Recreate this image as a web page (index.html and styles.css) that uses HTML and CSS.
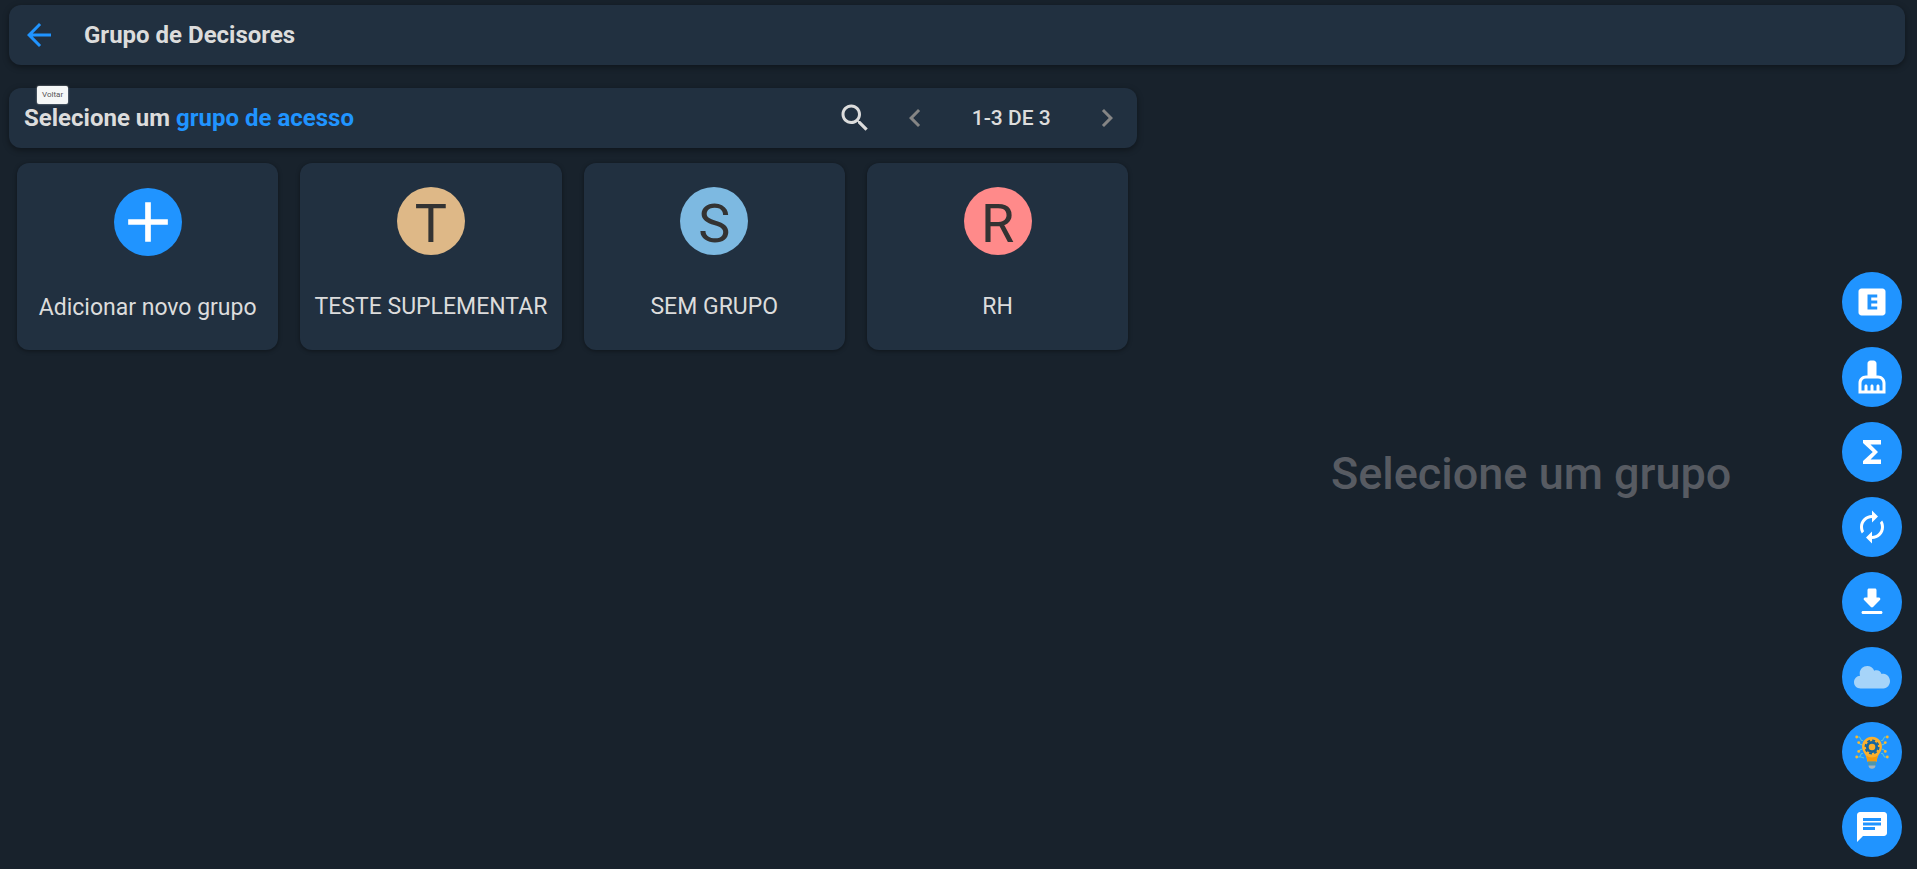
FILE: index.html
```
<!DOCTYPE html>
<html lang="pt-BR">
<head>
    <meta charset="UTF-8">
    <meta name="viewport" content="width=device-width, initial-scale=1.0">
    <title>Grupo de Decisores</title>
    <link rel="stylesheet" href="styles.css">
</head>
<body>
    <header class="topbar">
        <button type="button" class="icon-btn back-btn" aria-label="Voltar" aria-describedby="tooltip-voltar">
            <svg class="icon" viewBox="0 0 24 24"><path d="M20 11H7.83l5.59-5.59L12 4l-8 8 8 8 1.41-1.41L7.83 13H20v-2z"/></svg>
        </button>
        <h1>Grupo de Decisores</h1>
        <span class="tooltip" id="tooltip-voltar" role="tooltip">Voltar</span>
    </header>

    <main class="content">
        <section class="groups">
            <div class="toolbar">
                <h2>Selecione um <span>grupo de acesso</span></h2>
                <button type="button" class="icon-btn search-btn" aria-label="Pesquisar">
                    <svg class="icon" viewBox="0 0 24 24"><path d="M15.5 14h-.79l-.28-.27C15.41 12.59 16 11.11 16 9.5 16 5.91 13.09 3 9.5 3S3 5.91 3 9.5 5.91 16 9.5 16c1.61 0 3.09-.59 4.23-1.57l.27.28v.79l5 4.99L20.49 19l-4.99-5zm-6 0C7.01 14 5 11.99 5 9.5S7.01 5 9.5 5 14 7.01 14 9.5 11.99 14 9.5 14z"/></svg>
                </button>
                <div class="pager">
                    <button type="button" class="icon-btn" aria-label="Página anterior" disabled>
                        <svg class="icon" viewBox="0 0 24 24"><path d="M15.41 7.41L14 6l-6 6 6 6 1.41-1.41L10.83 12z"/></svg>
                    </button>
                    <span class="pager-text">1-3 DE 3</span>
                    <button type="button" class="icon-btn" aria-label="Próxima página" disabled>
                        <svg class="icon" viewBox="0 0 24 24"><path d="M10 6L8.59 7.41 13.17 12l-4.58 4.59L10 18l6-6z"/></svg>
                    </button>
                </div>
            </div>

            <div class="cards">
                <button type="button" class="card card-add">
                    <span class="avatar avatar-add">
                        <svg viewBox="0 0 24 24"><path d="M19 13h-6v6h-2v-6H5v-2h6V5h2v6h6v2z"/></svg>
                    </span>
                    <span class="card-name">Adicionar novo grupo</span>
                </button>
                <button type="button" class="card">
                    <span class="avatar avatar-tan">T</span>
                    <span class="card-name">TESTE SUPLEMENTAR</span>
                </button>
                <button type="button" class="card">
                    <span class="avatar avatar-sky">S</span>
                    <span class="card-name">SEM GRUPO</span>
                </button>
                <button type="button" class="card">
                    <span class="avatar avatar-red">R</span>
                    <span class="card-name">RH</span>
                </button>
            </div>
        </section>

        <section class="empty">
            <p>Selecione um grupo</p>
        </section>
    </main>

    <nav class="fabs" aria-label="Ações">
        <button type="button" class="fab" aria-label="Eventos">
            <svg class="icon" viewBox="0 0 24 24"><path fill-rule="evenodd" d="M19 3H5c-1.1 0-2 .9-2 2v14c0 1.1.9 2 2 2h14c1.1 0 2-.9 2-2V5c0-1.1-.9-2-2-2zm-3.500 6H11.500v2H15.500v2H11.500v2H15.500v2H9V7h6.500z"/></svg>
        </button>
        <button type="button" class="fab" aria-label="Limpar">
            <svg class="icon" viewBox="0 0 24 24"><path d="M16 11h-1V3c0-1.100-.9-2-2-2h-2c-1.100 0-2 .9-2 2v8H8c-2.760 0-5 2.240-5 5v7h18v-7c0-2.760-2.240-5-5-5zm3 10h-2v-3c0-.55-.45-1-1-1s-1 .45-1 1v3h-2v-3c0-.55-.45-1-1-1s-1 .45-1 1v3H9v-3c0-.55-.45-1-1-1s-1 .45-1 1v3H5v-5c0-1.650 1.350-3 3-3h8c1.650 0 3 1.350 3 3v5z"/></svg>
        </button>
        <button type="button" class="fab" aria-label="Somar">
            <svg class="icon" viewBox="0 0 24 24"><path d="M18 4H6v2l6.500 6L6 18v2h12v-3h-7l5-5-5-5h7z"/></svg>
        </button>
        <button type="button" class="fab" aria-label="Atualizar">
            <svg class="icon" viewBox="0 0 24 24"><path d="M12 6v3l4-4-4-4v3c-4.420 0-8 3.580-8 8 0 1.570.46 3.030 1.240 4.260L6.700 14.800c-.45-.83-.7-1.790-.7-2.800 0-3.310 2.690-6 6-6zm6.760 1.740L17.300 9.200c.44.84.7 1.790.7 2.800 0 3.310-2.690 6-6 6v-3l-4 4 4 4v-3c4.420 0 8-3.580 8-8 0-1.570-.46-3.030-1.240-4.260z"/></svg>
        </button>
        <button type="button" class="fab" aria-label="Baixar">
            <svg class="icon" viewBox="0 0 24 24"><path d="M16.590 9H15V4c0-.55-.45-1-1-1h-4c-.55 0-1 .45-1 1v5H7.410c-.89 0-1.340 1.080-.71 1.710l4.590 4.590c.39.39 1.020.39 1.410 0l4.590-4.590c.63-.63.19-1.710-.7-1.710zM5 19c0 .55.45 1 1 1h12c.55 0 1-.45 1-1s-.45-1-1-1H6c-.55 0-1 .45-1 1z"/></svg>
        </button>
        <button type="button" class="fab" aria-label="Nuvem">
            <svg class="icon" viewBox="0 0 36 36"><path fill="#a6d4f9" d="M6.500 29.500C2.900 29.500 0 26.900 0 23.300c0-3.600 2.700-6.300 6.100-6.500-.3-.8-.4-1.600-.4-2.400C5.700 10.200 9.100 7 13.200 7c3.200 0 6 2 7 4.700.8-.3 1.700-.5 2.600-.4 2.200.1 4 1.500 4.700 3.700.7-.2 1.400-.3 2.100-.3 3.600.2 6.400 3.500 6.400 7.400 0 4-2.700 7.400-6.500 7.400z"/></svg>
        </button>
        <button type="button" class="fab" aria-label="Sugestões">
            <svg class="icon" viewBox="0 0 36 36">
                <g fill="none" stroke="#5bc4d4" stroke-width="1.100">
                    <path d="M3 3h2.500l2 3.500h1.500M4.700 8.600l2 2h1.500M4.700 17.400l2-2h1.500M3 23h2.500l2-3.500h1.500M4 23h3l3 1"/>
                    <path d="M33 3h-2.500l-2 3.500h-1.500M31.300 8.600l-2 2h-1.500M31.300 17.400l-2-2h-1.500M33 23h-2.500l-2-3.500h-1.500"/>
                </g>
                <g fill="#fbb92c">
                    <circle cx="2.700" cy="3" r="1.400"/><circle cx="4.700" cy="8.600" r="1.400"/><circle cx="4.700" cy="17.400" r="1.400"/><circle cx="2.700" cy="23" r="1.400"/>
                    <circle cx="33.300" cy="3" r="1.400"/><circle cx="31.300" cy="8.600" r="1.400"/><circle cx="31.300" cy="17.400" r="1.400"/><circle cx="33.300" cy="23" r="1.400"/>
                </g>
                <path fill="#fbb02d" d="M18 2.700c-5.700 0-10 4.400-10 9.900 0 6 5 7.600 5.200 14.900h9.600C23 20.200 28 18.600 28 12.600c0-5.500-4.300-9.900-10-9.900z"/>
                <path fill="#f79a0a" d="M12 21.500c.8 1.700 1.200 3.500 1.200 6h9.600c0-2.500.4-4.300 1.200-6-1.800 1.300-3.800 2-6 2s-4.200-.7-6-2z"/>
                <circle cx="18" cy="13" r="4.700" fill="none" stroke="#1565a0" stroke-width="2.800"/>
                <circle cx="18" cy="13" r="6.600" fill="none" stroke="#1565a0" stroke-width="1.800" stroke-dasharray="2.900 2.284"/>
                <path fill="#4f97ab" d="M14 27.500h8v4h-8z"/>
                <path fill="#a9b5b8" d="M14.500 31.500h7c0 2-1.500 3.300-3.500 3.300s-3.500-1.300-3.500-3.300z"/>
            </svg>
        </button>
        <button type="button" class="fab" aria-label="Mensagens">
            <svg class="icon" viewBox="0 0 24 24"><path d="M20 2H4c-1.100 0-1.990.9-1.990 2L2 22l4-4h14c1.100 0 2-.9 2-2V4c0-1.100-.9-2-2-2zM6 9h12v2H6V9zm8 5H6v-2h8v2zm4-6H6V6h12v2z"/></svg>
        </button>
    </nav>
</body>
</html>
```

FILE: styles.css
```
* {
    margin: 0;
    padding: 0;
    box-sizing: border-box;
}

body {
    font-family: Roboto, sans-serif;
    background: #18222c;
    color: #dcdcdc;
    min-height: 100vh;
    display: flex;
    flex-direction: column;
}

button {
    font-family: inherit;
    color: inherit;
    background: none;
    border: none;
    cursor: pointer;
}

.icon {
    display: block;
    width: 36px;
    height: 36px;
    fill: currentColor;
}

.icon-btn:disabled {
    color: #858585;
    cursor: default;
}

.topbar,
.toolbar {
    display: flex;
    align-items: center;
    height: 60px;
    background: #213040;
    border-radius: 12px;
    box-shadow: 0 2px 6px rgba(0, 0, 0, 0.4);
}

.topbar {
    position: relative;
    margin: 5px 12px 0 9px;
    padding: 0 12px;
}

.back-btn {
    color: #2094ff;
}

h1,
h2 {
    font-size: 24px;
    font-weight: 700;
    line-height: 32px;
}

h1 {
    margin-left: 27px;
}

.tooltip {
    position: absolute;
    top: 81px;
    left: 28px;
    padding: 0 5px;
    font-size: 8px;
    line-height: 18px;
    color: #555;
    background: #f5f7f7;
    border-radius: 2px;
    box-shadow: 0 0 2px rgba(255, 255, 255, 0.6);
}

.content {
    flex: 1;
    display: grid;
    grid-template-columns: 46fr 31fr;
}

.groups {
    padding: 23px 8px 0 9px;
}

.toolbar {
    padding: 0 12px 0 15px;
}

.toolbar h2 {
    flex: 1;
}

.toolbar h2 span {
    color: #2094ff;
}

.search-btn {
    margin-right: 24px;
}

.pager {
    display: flex;
    align-items: center;
    justify-content: space-between;
    width: 228px;
}

.pager-text {
    font-size: 21px;
    font-weight: 500;
}

.cards {
    display: grid;
    grid-template-columns: repeat(4, 1fr);
    gap: 22px;
    padding: 15px 9px 15px 8px;
}

.card {
    display: flex;
    flex-direction: column;
    align-items: center;
    gap: 36px;
    padding: 24px 8px 27px;
    background: #213040;
    border-radius: 12px;
    box-shadow: 0 1px 4px rgba(0, 0, 0, 0.4);
}

.card-add {
    padding: 25px 8px 26px;
}

.card-name {
    font-size: 23px;
    line-height: 32px;
    white-space: nowrap;
}

.avatar {
    width: 68px;
    height: 68px;
    border-radius: 50%;
    font-size: 54px;
    line-height: 74px;
    text-align: center;
    color: #333;
}

.avatar svg {
    display: block;
    fill: #fff;
}

.avatar-add {
    background: #2094ff;
}

.avatar-tan {
    background: #deb887;
}

.avatar-sky {
    background: #7db9e1;
}

.avatar-red {
    background: #ff8a8a;
}

.empty {
    display: flex;
    align-items: center;
    justify-content: center;
    padding-top: 12px;
}

.empty p {
    font-size: 45px;
    font-weight: 500;
    color: #575b62;
}

.fabs {
    position: fixed;
    right: 15px;
    bottom: 12px;
    display: flex;
    flex-direction: column;
    gap: 15px;
}

.fab {
    display: flex;
    align-items: center;
    justify-content: center;
    width: 60px;
    height: 60px;
    border-radius: 50%;
    color: #fff;
    background: #2094ff;
}
```
